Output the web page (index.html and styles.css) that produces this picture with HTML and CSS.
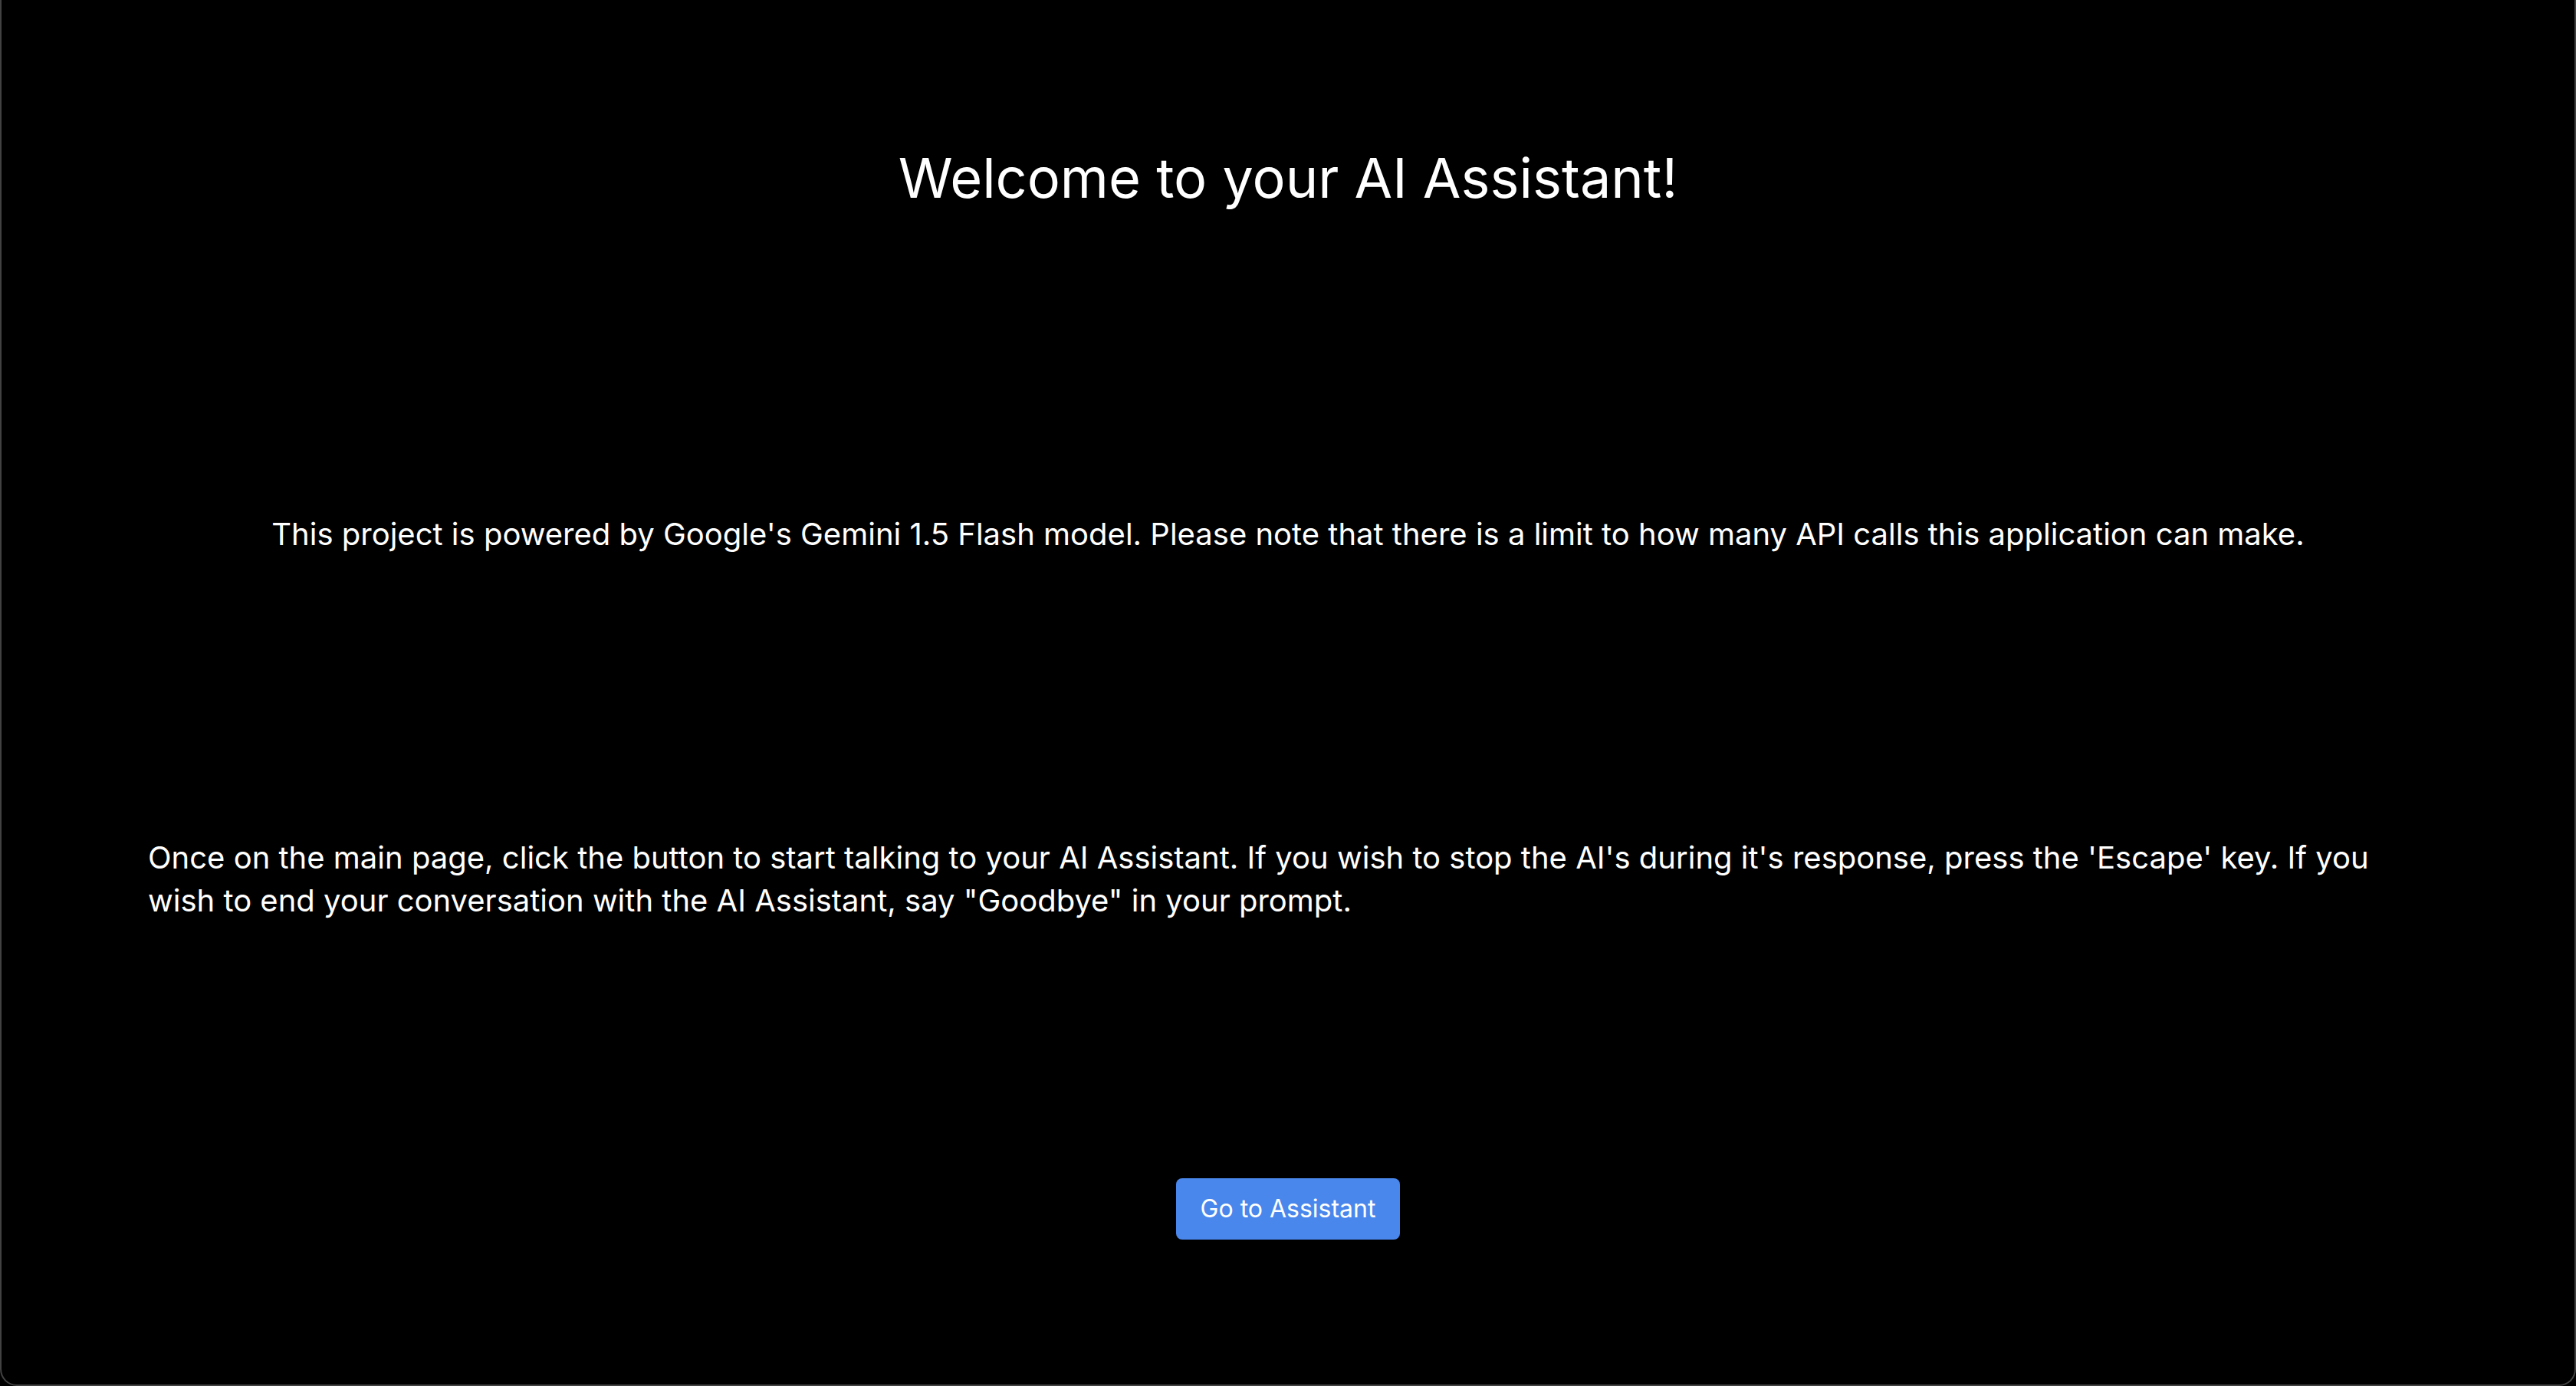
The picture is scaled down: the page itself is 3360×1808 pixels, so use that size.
FILE: index.html
```html
<!DOCTYPE html>
<html lang="en">
<head>
<meta charset="utf-8">
<title>AI Assistant</title>
<link rel="stylesheet" href="styles.css">
</head>
<body>
<div class="frame">
  <main class="main">
    <h1 class="title">Welcome to your AI Assistant!</h1>
    <p class="note">This project is powered by Google's Gemini 1.5 Flash model. Please note that there is a limit to how many API calls this application can make.</p>
    <p class="instructions">Once on the main page, click the button to start talking to your AI Assistant. If you wish to stop the AI's during it's response, press the 'Escape' key. If you wish to end your conversation with the AI Assistant, say "Goodbye" in your prompt.</p>
    <button class="btn" type="button">Go to Assistant</button>
  </main>
</div>
</body>
</html>
```
FILE: styles.css
```css
html, body {
  margin: 0;
  padding: 0;
  background: #000;
}
body {
  font-family: Inter, "Noto Sans", sans-serif;
  color: #fff;
}
.frame {
  box-sizing: border-box;
  width: 3360px;
  height: 1808px;
  background: #000;
  border: 2px solid #424242;
  border-top: none;
  border-radius: 0 0 22px 22px;
  overflow: hidden;
}
.main {
  box-sizing: border-box;
  display: flex;
  flex-direction: column;
  align-items: center;
  padding: 192px 191px;
  height: 100%;
}
.title {
  margin: 0;
  font-size: 72px;
  line-height: 80px;
  font-weight: 400;
}
.note {
  margin: 397px 0 0;
  font-size: 40px;
  line-height: 56px;
  text-align: center;
}
.instructions {
  margin: 366px 0 0;
  width: 100%;
  font-size: 40px;
  line-height: 56px;
  text-align: left;
}
.btn {
  margin-top: 334px;
  font-family: Inter, "Noto Sans", sans-serif;
  font-size: 32px;
  line-height: 48px;
  padding: 16px 32px;
  border: none;
  border-radius: 8px;
  background: #4a87ec;
  color: #fff;
  cursor: pointer;
}
```
